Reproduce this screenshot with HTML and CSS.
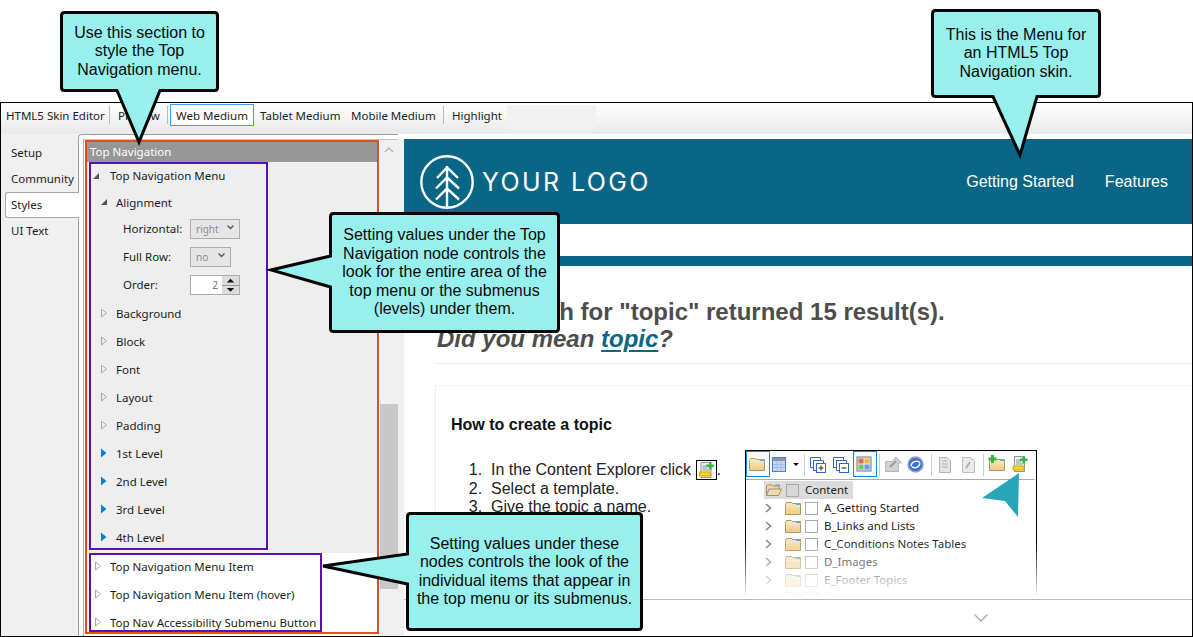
FILE: index.html
```html
<!DOCTYPE html>
<html>
<head>
    <meta charset="UTF-8">
    <title>HTML5 Skin Editor - Top Navigation</title>
    <link rel="stylesheet" href="styles.css">
</head>
<body>
<svg class="defs">
    <linearGradient id="folder-fill" x1="0" y1="0" x2="0" y2="1">
        <stop offset="0" stop-color="#fbeac0"/>
        <stop offset="1" stop-color="#eccb85"/>
    </linearGradient>
    <symbol id="folder" viewBox="0 0 16 13">
        <path d="M.5 2.5V12.5H15.5V1.5H7.5L6.5 .5H1.5Z" fill="url(#folder-fill)" stroke="#b3955c"/>
        <path d="M.5 4.5H15.5" stroke="#f7e6bd"/>
        <path d="M11 1.5H15V3H11Z" fill="#4fb6d8"/>
    </symbol>
    <symbol id="folder-open" viewBox="0 0 16 13">
        <path d="M.5 11.5V2L1.5 1H6L7 2H13V5H3L.5 11.5H12.5L15.5 5H13" fill="#f0d8a8" stroke="#b08f58"/>
        <path d="M9 .5H14V2H9Z" fill="#4fb6d8"/>
    </symbol>
    <symbol id="doc-plus" viewBox="0 0 16 16">
        <path d="M2.5 .5H10L12.5 3V15.5H2.5Z" fill="#eef1ec" stroke="#8d968d"/>
        <path d="M4 4H9M4 6H9M4 8H11" stroke="#8c9a8c"/>
        <path d="M1 10H12V14H1Z" fill="#f6d327" stroke="#d1a90f"/>
        <path d="M10.5 0H13V2.5H15.5V5H13V7.5H10.5V5H8V2.5H10.5Z" fill="#35b543"/>
    </symbol>
    <symbol id="chevron-right" viewBox="0 0 7 10">
        <path d="M1 1L5.5 5L1 9" fill="none" stroke="#888" stroke-width="1.6"/>
    </symbol>
</svg>

<div class="page">
    <div class="window">
        <div class="toolbar">
            <span class="tool tool-editor">HTML5 Skin Editor</span>
            <span class="tool-sep"></span>
            <span class="tool tool-preview">Preview</span>
            <span class="tool-sep"></span>
            <span class="tool tool-active">Web Medium</span>
            <span class="tool tool-tablet">Tablet Medium</span>
            <span class="tool tool-mobile">Mobile Medium</span>
            <span class="tool-sep"></span>
            <span class="tool tool-highlight">Highlight</span>
            <span class="tool-blank"></span>
        </div>

        <div class="main">
            <div class="sidebar">
                <div class="side-item">Setup</div>
                <div class="side-item">Community</div>
                <div class="side-item side-active">Styles</div>
                <div class="side-item">UI Text</div>
            </div>

            <div class="panel">
                <div class="tree-wrap">
                    <div class="red-box">
                        <div class="tree-title">Top Navigation</div>
                        <div class="group-gray">
                            <div class="purple-box box-menu">
                                <div class="row row-menu"><svg class="arrow" viewBox="0 0 8 10"><path d="M1 8H7V2Z" fill="#555"/></svg><span>Top Navigation Menu</span></div>
                                <div class="row row-sub"><svg class="arrow" viewBox="0 0 8 10"><path d="M1 8H7V2Z" fill="#555"/></svg><span>Alignment</span></div>
                                <div class="field field-first">
                                    <span class="field-label">Horizontal:</span>
                                    <span class="select select-wide">right<svg class="select-chev" viewBox="0 0 7 5"><path d="M.5 .5L3.5 3.5L6.5 .5" fill="none" stroke="#555" stroke-width="1.3"/></svg></span>
                                </div>
                                <div class="field">
                                    <span class="field-label">Full Row:</span>
                                    <span class="select select-narrow">no<svg class="select-chev" viewBox="0 0 7 5"><path d="M.5 .5L3.5 3.5L6.5 .5" fill="none" stroke="#555" stroke-width="1.3"/></svg></span>
                                </div>
                                <div class="field">
                                    <span class="field-label">Order:</span>
                                    <span class="spin">
                                        <span class="spin-value">2</span>
                                        <span class="spin-btns">
                                            <svg class="spin-btn" viewBox="0 0 16 9"><path d="M4 7L8 3L12 7Z" fill="#111"/></svg>
                                            <svg class="spin-btn" viewBox="0 0 16 9"><path d="M4 2L8 6L12 2Z" fill="#111"/></svg>
                                        </span>
                                    </span>
                                </div>
                                <div class="row row-sub row-after-fields"><svg class="arrow" viewBox="0 0 8 10"><path d="M1.5 1L6.5 5L1.5 9Z" fill="#eee" stroke="#aaa"/></svg><span>Background</span></div>
                                <div class="row row-sub"><svg class="arrow" viewBox="0 0 8 10"><path d="M1.5 1L6.5 5L1.5 9Z" fill="#eee" stroke="#aaa"/></svg><span>Block</span></div>
                                <div class="row row-sub"><svg class="arrow" viewBox="0 0 8 10"><path d="M1.5 1L6.5 5L1.5 9Z" fill="#eee" stroke="#aaa"/></svg><span>Font</span></div>
                                <div class="row row-sub"><svg class="arrow" viewBox="0 0 8 10"><path d="M1.5 1L6.5 5L1.5 9Z" fill="#eee" stroke="#aaa"/></svg><span>Layout</span></div>
                                <div class="row row-sub"><svg class="arrow" viewBox="0 0 8 10"><path d="M1.5 1L6.5 5L1.5 9Z" fill="#eee" stroke="#aaa"/></svg><span>Padding</span></div>
                                <div class="row row-sub"><svg class="arrow" viewBox="0 0 8 10"><path d="M1 .5L6.5 5L1 9.5Z" fill="#0d7fcc"/></svg><span>1st Level</span></div>
                                <div class="row row-sub"><svg class="arrow" viewBox="0 0 8 10"><path d="M1 .5L6.5 5L1 9.5Z" fill="#0d7fcc"/></svg><span>2nd Level</span></div>
                                <div class="row row-sub"><svg class="arrow" viewBox="0 0 8 10"><path d="M1 .5L6.5 5L1 9.5Z" fill="#0d7fcc"/></svg><span>3rd Level</span></div>
                                <div class="row row-sub"><svg class="arrow" viewBox="0 0 8 10"><path d="M1 .5L6.5 5L1 9.5Z" fill="#0d7fcc"/></svg><span>4th Level</span></div>
                            </div>
                        </div>
                        <div class="group-white">
                            <div class="purple-box box-items">
                                <div class="row row-item row-item-first"><svg class="arrow" viewBox="0 0 8 10"><path d="M1.5 1L6.5 5L1.5 9Z" fill="#fff" stroke="#aaa"/></svg><span>Top Navigation Menu Item</span></div>
                                <div class="row row-item"><svg class="arrow" viewBox="0 0 8 10"><path d="M1.5 1L6.5 5L1.5 9Z" fill="#fff" stroke="#aaa"/></svg><span>Top Navigation Menu Item (hover)</span></div>
                                <div class="row row-item"><svg class="arrow" viewBox="0 0 8 10"><path d="M1.5 1L6.5 5L1.5 9Z" fill="#fff" stroke="#aaa"/></svg><span>Top Nav Accessibility Submenu Button</span></div>
                            </div>
                        </div>
                    </div>
                    <div class="scrollbar">
                        <svg class="scroll-up" viewBox="0 0 10 6"><path d="M1 5L5 1L9 5" fill="none" stroke="#b5b5b5" stroke-width="1.4"/></svg>
                        <div class="scroll-thumb"></div>
                    </div>
                </div>
            </div>

            <div class="preview">
                <div class="preview-inner">
                    <div class="site-header">
                        <div class="logo">
                            <svg class="logo-mark" viewBox="0 0 54 54">
                                <circle cx="27" cy="27" r="25.7" fill="none" stroke="#fff" stroke-width="2.4"/>
                                <path d="M27 11V53M17 23L27 12.5L38 23M16 33.5L27 22.5L39 33.5M16 44.5L27 33.5L39 44.5" fill="none" stroke="#fff" stroke-width="2.4"/>
                            </svg>
                            <span class="logo-text">YOUR LOGO</span>
                        </div>
                        <div class="site-nav">
                            <a class="site-link">Getting Started</a>
                            <a class="site-link">Features</a>
                        </div>
                    </div>

                    <div class="site-body">
                        <div class="site-bar"></div>
                        <h1 class="result-title">Your search for "topic" returned 15 result(s).<br><em>Did you mean <a class="result-link">topic</a>?</em></h1>
                        <div class="result-rule"></div>
                        <div class="article">
                            <h3 class="article-title">How to create a topic</h3>
                            <div class="article-row">
                                <ol class="steps">
                                    <li class="step-icon">In the Content Explorer click <span class="inline-icon"><svg class="inline-doc"><use href="#doc-plus"/></svg></span>.</li>
                                    <li>Select a template.</li>
                                    <li>Give the topic a name.</li>
                                </ol>
                                <div class="inset">
                                    <svg class="inset-tools" viewBox="0 0 289 28">
                                        <rect x=".5" y=".5" width="23" height="25" fill="#f4fafe" stroke="#1a86dc"/>
                                        <use href="#folder" x="3" y="7" width="16" height="13"/>
                                        <rect x="26.5" y="6.5" width="13" height="14" fill="#c6d6f4" stroke="#5a78c4"/>
                                        <rect x="27" y="7" width="12" height="3" fill="#8a94a8"/>
                                        <path d="M27 13.5H39M27 16.5H39M31 10V20M35 10V20" stroke="#a3b8e6"/>
                                        <path d="M47 12H53L50 15Z" fill="#111"/>
                                        <path d="M58.5 3V25M133.5 3V25M185.5 3V25M237.5 3V25" stroke="#ccc"/>
                                        <path d="M64.5 6.5H74.5V9.5H67.5V16.5H64.5ZM67.5 9.5H77.5V12.5H70.5V19.5H67.5Z" fill="#fff" stroke="#2f66c8"/>
                                        <rect x="70.5" y="12.5" width="9" height="9" fill="#fff" stroke="#2f66c8"/>
                                        <path d="M72.5 17H77.5M75 14.5V19.5" stroke="#222"/>
                                        <path d="M87.5 6.5H97.5V9.5H90.5V16.5H87.5ZM90.5 9.5H100.5V12.5H93.5V19.5H90.5Z" fill="#fff" stroke="#2f66c8"/>
                                        <rect x="93.5" y="12.5" width="9" height="9" fill="#fff" stroke="#2f66c8"/>
                                        <path d="M95.5 17H100.5" stroke="#222"/>
                                        <rect x="107.5" y=".5" width="23" height="25" fill="#f4fafe" stroke="#1a86dc"/>
                                        <rect x="111" y="6" width="14" height="14" fill="#e8e8e8" stroke="#777"/>
                                        <path d="M112.5 7.5H117.5V12.5H112.5Z" fill="#e8675c"/>
                                        <path d="M118.5 7.5H123.5V12.5H118.5Z" fill="#f1b54a"/>
                                        <path d="M112.5 13.5H117.5V18.5H112.5Z" fill="#76c26e"/>
                                        <path d="M118.5 13.5H123.5V18.5H118.5Z" fill="#6f9fe0"/>
                                        <path d="M139.5 10.5H146L150 6L155.5 12H152.5V20.5H139.5Z" fill="#d2d2d2" stroke="#b5b5b5"/>
                                        <path d="M144 16L150 10" stroke="#9c9c9c" stroke-width="2"/>
                                        <circle cx="169.5" cy="13.5" r="7.5" fill="#3f6fd0" stroke="#9aa6bd" stroke-width="1.6"/>
                                        <path d="M165 15C165.5 10.5 170.5 9 174 11.5M174 12C173.5 16.5 168.5 18 165.5 15.5" fill="none" stroke="#fff" stroke-width="1.3"/>
                                        <path d="M193.5 6.5H201L204.5 10V21.5H193.5Z" fill="#e4e4e4" stroke="#b5b5b5"/>
                                        <path d="M196 10H201M196 13H202M196 16H202" stroke="#b0b0b0"/>
                                        <path d="M216.5 6.5H224L228.5 10V21.5H216.5Z" fill="#ebebeb" stroke="#bdbdbd"/>
                                        <path d="M220 17L224 11" stroke="#b0b0b0" stroke-width="2"/>
                                        <use href="#folder" x="243" y="7" width="16" height="13"/>
                                        <path d="M245 4H248V6.5H250.5V9.5H248V12H245V9.5H242.5V6.5H245Z" fill="#35b543"/>
                                        <use href="#doc-plus" x="266" y="5" width="16" height="16"/>
                                    </svg>
                                    <div class="inset-tree">
                                        <div class="inset-row inset-root">
                                            <svg class="inset-folder"><use href="#folder-open"/></svg>
                                            <span class="inset-check inset-check-gray"></span>
                                            <span class="inset-label">Content</span>
                                        </div>
                                        <div class="inset-row">
                                            <svg class="inset-chev"><use href="#chevron-right"/></svg>
                                            <svg class="inset-folder"><use href="#folder"/></svg>
                                            <span class="inset-check"></span>
                                            <span class="inset-label">A_Getting Started</span>
                                        </div>
                                        <div class="inset-row">
                                            <svg class="inset-chev"><use href="#chevron-right"/></svg>
                                            <svg class="inset-folder"><use href="#folder"/></svg>
                                            <span class="inset-check"></span>
                                            <span class="inset-label">B_Links and Lists</span>
                                        </div>
                                        <div class="inset-row">
                                            <svg class="inset-chev"><use href="#chevron-right"/></svg>
                                            <svg class="inset-folder"><use href="#folder"/></svg>
                                            <span class="inset-check"></span>
                                            <span class="inset-label">C_Conditions Notes Tables</span>
                                        </div>
                                        <div class="inset-row">
                                            <svg class="inset-chev"><use href="#chevron-right"/></svg>
                                            <svg class="inset-folder"><use href="#folder"/></svg>
                                            <span class="inset-check"></span>
                                            <span class="inset-label">D_Images</span>
                                        </div>
                                        <div class="inset-row">
                                            <svg class="inset-chev"><use href="#chevron-right"/></svg>
                                            <svg class="inset-folder"><use href="#folder"/></svg>
                                            <span class="inset-check"></span>
                                            <span class="inset-label">E_Footer Topics</span>
                                        </div>
                                        <div class="inset-row">
                                            <svg class="inset-chev"><use href="#chevron-right"/></svg>
                                            <svg class="inset-folder"><use href="#folder"/></svg>
                                            <span class="inset-check"></span>
                                            <span class="inset-label">Resources</span>
                                        </div>
                                    </div>
                                    <div class="inset-fade"></div>
                                    <svg class="inset-pointer" viewBox="0 0 38 44"><path d="M37 0L0 25L23 28L36 44Z" fill="#2aa5b8"/></svg>
                                </div>
                            </div>
                        </div>
                    </div>

                    <div class="site-foot">
                        <svg class="foot-chev" viewBox="0 0 14 8"><path d="M.5 .5L7 7L13.5 .5" fill="none" stroke="#a8a8a8" stroke-width="1.3"/></svg>
                    </div>
                </div>
            </div>
        </div>
    </div>

    <!-- callouts over the screenshot -->
    <div class="callout callout-section">
        <svg class="callout-shape"><path d="M4.5 1.5H154.5Q157.5 1.5 157.5 4.5V76.5Q157.5 79.5 154.5 79.5H100L79 131L57 79.5H4.5Q1.5 79.5 1.5 76.5V4.5Q1.5 1.5 4.5 1.5Z"/></svg>
        <p class="callout-text">Use this section to<br>style the Top<br>Navigation menu.</p>
    </div>
    <div class="callout callout-skin">
        <svg class="callout-shape"><path d="M4.5 1.5H165.5Q168.5 1.5 168.5 4.5V84.5Q168.5 87.5 165.5 87.5H106L89 146L62 87.5H4.5Q1.5 87.5 1.5 84.5V4.5Q1.5 1.5 4.5 1.5Z"/></svg>
        <p class="callout-text">This is the Menu for<br>an HTML5 Top<br>Navigation skin.</p>
    </div>
    <div class="callout callout-node">
        <svg class="callout-shape"><path d="M4.5 1.5H226.5Q229.5 1.5 229.5 4.5V116.5Q229.5 119.5 226.5 119.5H4.5Q1.5 119.5 1.5 116.5V75L-58 58L1.5 44V4.5Q1.5 1.5 4.5 1.5Z"/></svg>
        <p class="callout-text">Setting values under the Top<br>Navigation node controls the<br>look for the entire area of the<br>top menu or the submenus<br>(levels) under them.</p>
    </div>
    <div class="callout callout-items">
        <svg class="callout-shape"><path d="M4.5 1.5H232.5Q235.5 1.5 235.5 4.5V114.5Q235.5 117.5 232.5 117.5H4.5Q1.5 117.5 1.5 114.5V72L-83 54L1.5 42V4.5Q1.5 1.5 4.5 1.5Z"/></svg>
        <p class="callout-text">Setting values under these<br>nodes controls the look of the<br>individual items that appear in<br>the top menu or its submenus.</p>
    </div>
</div>
</body>
</html>
```

FILE: styles.css
```css
html, body {
    margin: 0;
    background-color: #fff;
}

.defs {
    position: absolute;
    width: 0;
    height: 0;
}

.page {
    position: relative;
    width: 1193px;
    height: 637px;
    padding-top: 102px;
    box-sizing: border-box;
    overflow: hidden;
    font-family: "Noto Sans", sans-serif;
    font-size: 11.5px;
    color: #1c1c1c;
}

.window {
    height: 535px;
    box-sizing: border-box;
    border: 1px solid #000;
    display: flex;
    flex-direction: column;
    background-color: #f0f0f0;
}

/* toolbar */
.toolbar {
    height: 31px;
    flex: none;
    display: flex;
    align-items: flex-start;
    background: linear-gradient(#fff, #e9e9e9);
}

.tool {
    height: 22px;
    margin-top: 1px;
    line-height: 24px;
    box-sizing: border-box;
    white-space: nowrap;
}

.tool-sep {
    width: 1px;
    height: 18px;
    margin-top: 3px;
    background-color: #bbb;
}

.tool-editor { width: 108px; padding-left: 5px; }
.tool-preview { width: 57px; padding-left: 8px; }
.tool-tablet { width: 90px; padding-left: 6px; }
.tool-mobile { width: 99px; padding-left: 7px; }
.tool-highlight { width: 63px; padding-left: 8px; }

.tool-active {
    width: 84px;
    margin-left: 2px;
    border: 1px solid #3e9bef;
    line-height: 22px;
    text-align: center;
    background-color: #fff;
}

.tool-blank {
    width: 89px;
    height: 25px;
    margin-top: 2px;
    border-radius: 2px;
    background-color: #f1f1f1;
}

.main {
    flex: 1;
    display: flex;
    min-height: 0;
}

/* left tabs */
.sidebar {
    width: 77px;
    flex: none;
    padding-top: 6px;
    box-sizing: border-box;
}

.side-item {
    height: 26px;
    line-height: 26px;
    padding-left: 10px;
}

.side-active {
    position: relative;
    z-index: 1;
    margin-left: 4px;
    margin-right: -1px;
    height: 26px;
    padding-left: 5px;
    line-height: 24px;
    box-sizing: border-box;
    border: 1px solid #a6a6a6;
    border-right: 0;
    border-radius: 3px 0 0 3px;
    background-color: #fff;
}

/* tree panel */
.panel {
    width: 320px;
    flex: none;
    box-sizing: border-box;
    padding: 4px 0 0 4px;
    border-left: 1px solid #a0a0a0;
    border-top: 1px solid #a0a0a0;
    border-top-left-radius: 4px;
    background-color: #fff;
    display: flex;
}

.tree-wrap {
    flex: 1;
    display: flex;
    gap: 1px;
    padding-left: 1px;
    border-left: 1px solid #b0b0b0;
    border-top: 1px solid #c4c4c4;
    background-color: #fff;
}

.red-box {
    width: 294px;
    height: 494px;
    flex: none;
    box-sizing: border-box;
    border: 2px solid #e64a1f;
}

.tree-title {
    height: 20px;
    line-height: 20px;
    padding-left: 3px;
    color: #fff;
    background-color: #979797;
}

.group-gray {
    padding: 0 0 3px 2px;
    background-color: #eee;
}

.group-white {
    padding-left: 2px;
    background-color: #fff;
}

.purple-box {
    box-sizing: border-box;
    border: 2px solid #5a10b5;
}

.box-menu {
    width: 179px;
    height: 388px;
}

.box-items {
    width: 233px;
    height: 79px;
}

.row {
    height: 28px;
    box-sizing: border-box;
    padding-bottom: 2px;
    display: flex;
    align-items: center;
    white-space: nowrap;
}

.arrow {
    width: 8px;
    height: 10px;
    flex: none;
    margin-right: 8px;
}

.row-menu {
    height: 25px;
    padding-left: 1px;
}

.row-menu .arrow {
    margin-right: 10px;
}

.row-sub {
    padding-left: 9px;
}

.row-after-fields {
    margin-top: 1px;
}

.row-item {
    padding-left: 3px;
}

.row-item-first {
    margin-top: -2px;
}

.field {
    height: 28px;
    display: flex;
    align-items: center;
    padding-left: 32px;
}

.field-first {
    margin-top: -2px;
}

.field-label {
    width: 67px;
    flex: none;
    margin-top: -2px;
}

.select {
    position: relative;
    height: 20px;
    box-sizing: border-box;
    border: 1px solid #adadad;
    background-color: #e6e6e6;
    line-height: 18px;
    padding-left: 5px;
    font-size: 10px;
    color: #8f8f8f;
}

.select-wide { width: 50px; }
.select-narrow { width: 41px; }

.select-chev {
    position: absolute;
    right: 5px;
    top: 5px;
    width: 7px;
    height: 5px;
}

.spin {
    width: 50px;
    height: 20px;
    box-sizing: border-box;
    border: 1px solid #adadad;
    display: flex;
    background-color: #fff;
}

.spin-value {
    flex: 1;
    text-align: right;
    padding-right: 4px;
    line-height: 18px;
    font-size: 10px;
    color: #777;
}

.spin-btns {
    width: 17px;
    display: flex;
    flex-direction: column;
    gap: 1px;
    background-color: #999;
}

.spin-btn {
    width: 17px;
    height: 8.5px;
    background-color: #dcdcdc;
}

.scrollbar {
    width: 18px;
    flex: none;
    background-color: #f0f0f0;
}

.scroll-up {
    display: block;
    width: 10px;
    height: 6px;
    margin: 7px auto 0;
}

.scroll-thumb {
    height: 185px;
    margin-top: 251px;
    background-color: #c8c8c8;
}

/* preview of the skin */
.preview {
    flex: 1;
    min-width: 0;
    padding-top: 5px;
    background-color: #fff;
    display: flex;
}

.preview-inner {
    flex: 1;
    min-width: 0;
    border-left: 6px solid #f0f0f0;
    display: flex;
    flex-direction: column;
    background-color: #fff;
}

.site-header {
    height: 85px;
    flex: none;
    display: flex;
    align-items: center;
    justify-content: space-between;
    padding: 0 24px 0 16px;
    background-color: #0a6686;
}

.logo {
    display: flex;
    align-items: center;
    gap: 8px;
}

.logo-mark {
    width: 54px;
    height: 54px;
}

.logo-text {
    font-family: "Inter", sans-serif;
    font-size: 25px;
    letter-spacing: 2.4px;
    color: #fff;
}

.site-nav {
    display: flex;
    gap: 31px;
}

.site-link {
    font-family: "Liberation Sans", Arial, sans-serif;
    font-size: 16px;
    color: #fff;
}

.site-body {
    flex: 1;
    min-height: 0;
    overflow: hidden;
    padding-top: 32px;
    border-bottom: 1px solid #bbb;
    font-family: "Liberation Sans", Arial, sans-serif;
}

.site-bar {
    height: 10px;
    background-color: #0a6686;
}

.result-title {
    margin: 32px 0 11px;
    padding-left: 33px;
    font-size: 24px;
    line-height: 27px;
    font-weight: bold;
    color: #4d4d4d;
    white-space: nowrap;
}

.result-link {
    color: #0a6686;
    text-decoration: underline;
    text-decoration-thickness: 2px;
    text-underline-offset: 3px;
}

.result-rule {
    margin-left: 32px;
    height: 1px;
    background-color: #ededed;
}

.article {
    margin: 21px 0 0 31px;
    padding: 29px 0 0 15px;
    border-top: 1px solid #f2f2f2;
    border-left: 1px solid #efefef;
    height: 300px;
    box-sizing: border-box;
}

.article-title {
    margin: 0 0 15px;
    font-size: 16px;
    line-height: 20px;
    color: #111;
}

.article-row {
    display: flex;
}

.steps {
    width: 294px;
    flex: none;
    box-sizing: border-box;
    margin: 0;
    padding: 9px 0 0 40px;
    font-size: 16px;
    line-height: 18px;
    color: #222;
    white-space: nowrap;
}

.steps li::marker {
    content: counter(list-item) ".\00a0\00a0";
}

.step-icon {
    height: 21px;
    line-height: 21px;
}

.inline-icon {
    display: inline-block;
    width: 21px;
    height: 20px;
    box-sizing: border-box;
    border: 1px solid #000;
    vertical-align: -5px;
    padding: 1px;
}

.inline-doc {
    display: block;
    width: 17px;
    height: 16px;
}

.inset {
    position: relative;
    width: 292px;
    height: 180px;
    flex: none;
    box-sizing: border-box;
    border: 1px solid #000;
    font-family: "Noto Sans", sans-serif;
    font-size: 11.5px;
    color: #222;
}

.inset-tools {
    display: block;
    width: 289px;
    height: 28px;
    border-bottom: 1px solid #aaa;
}

.inset-tree {
    padding: 1px 0 0 18px;
}

.inset-row {
    height: 18px;
    display: flex;
    align-items: center;
    white-space: nowrap;
}

.inset-root {
    width: 89px;
    padding-left: 2px;
    box-sizing: border-box;
    background-color: #dcdcdc;
}

.inset-label {
    margin-top: -2px;
}

.inset-chev {
    width: 7px;
    height: 10px;
    flex: none;
    margin: 0 13px 0 1px;
}

.inset-folder {
    width: 16px;
    height: 13px;
    flex: none;
    margin-right: 4px;
}

.inset-check {
    width: 13px;
    height: 13px;
    flex: none;
    box-sizing: border-box;
    margin-right: 6px;
    border: 1px solid #a8a8a8;
    background-color: #fff;
}

.inset-check-gray {
    background-color: #d8d8d8;
}

.inset-fade {
    position: absolute;
    left: -2px;
    right: -2px;
    top: 90px;
    height: 60px;
    background: linear-gradient(rgba(255, 255, 255, 0), #fff 95%);
}

.inset-pointer {
    position: absolute;
    left: 236px;
    top: 22px;
    width: 38px;
    height: 44px;
}

.site-foot {
    height: 36px;
    flex: none;
    display: flex;
    align-items: center;
    justify-content: flex-end;
    padding-right: 204px;
}

.foot-chev {
    width: 14px;
    height: 8px;
}

/* callouts */
.callout {
    position: absolute;
    display: flex;
    align-items: center;
    justify-content: center;
}

.callout-shape {
    position: absolute;
    left: 0;
    top: 0;
    width: 100%;
    height: 100%;
    overflow: visible;
}

.callout-shape path {
    fill: #97f0ed;
    stroke: #050505;
    stroke-width: 3;
}

.callout-text {
    position: relative;
    margin: 0;
    font-family: "Liberation Sans", Arial, sans-serif;
    font-size: 16px;
    line-height: 18.5px;
    text-align: center;
    white-space: nowrap;
    color: #0a0a0a;
}

.callout-section { left: 60px; top: 11px; width: 159px; height: 81px; }
.callout-skin { left: 931px; top: 9px; width: 170px; height: 89px; }
.callout-node { left: 329px; top: 212px; width: 231px; height: 121px; }
.callout-items { left: 406px; top: 512px; width: 237px; height: 119px; }
```
